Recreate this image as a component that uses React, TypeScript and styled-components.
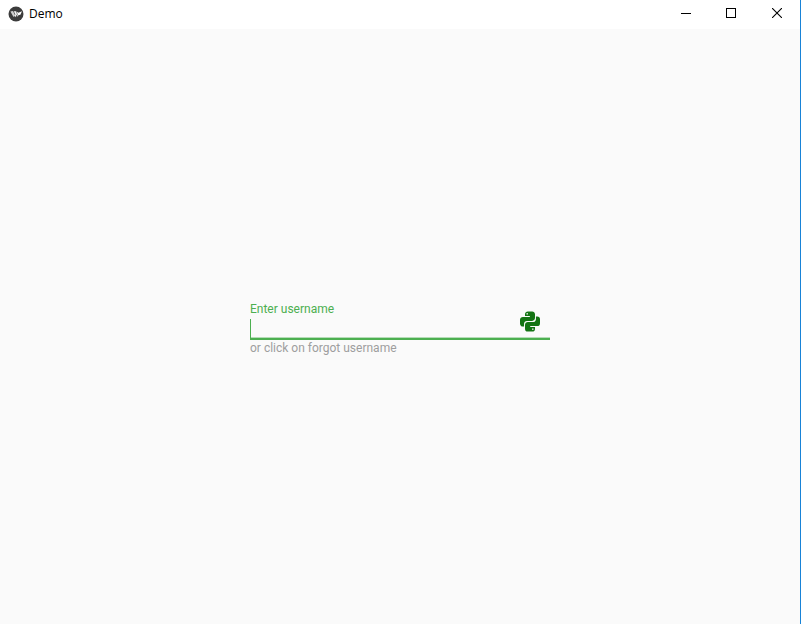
import React from "react";
import styled, { createGlobalStyle } from "styled-components";

const GlobalStyle = createGlobalStyle`
  *, *::before, *::after { box-sizing: border-box; }
  body { margin: 0; background: #fafafa; }
`;

const Window = styled.div`
  display: flex;
  flex-direction: column;
  min-height: 100vh;
  background: #fafafa;
  border-right: 1px solid #1883d7;
`;

const TitleBar = styled.header`
  display: flex;
  align-items: center;
  justify-content: space-between;
  height: 29px;
  padding: 0 0 2px 8px;
  background: #ffffff;
`;

const TitleGroup = styled.div`
  display: flex;
  align-items: center;
  gap: 5px;
`;

const Title = styled.h1`
  margin: 0;
  padding-top: 1px;
  font: 400 12px/16px "Open Sans", "Noto Sans", sans-serif;
  color: #000000;
`;

const WindowControls = styled.div`
  display: flex;
`;

const ControlButton = styled.button`
  display: flex;
  align-items: center;
  justify-content: center;
  width: 46px;
  height: 27px;
  padding: 0 0 1px;
  border: 0;
  background: transparent;
  color: #000000;

  &:hover { background: #e5e5e5; }
`;

const Content = styled.main`
  flex: 1;
  display: flex;
  align-items: center;
  justify-content: center;
`;

const Field = styled.div`
  display: flex;
  flex-direction: column;
  width: 300px;
  padding: 5px 0 1px;
  font: 400 12px/16px Roboto, sans-serif;
`;

const Label = styled.label`
  color: #4caf50;
`;

const InputRow = styled.div`
  position: relative;
  display: flex;
  height: 22px;
  margin-top: 1px;
  border-bottom: 2px solid #4caf50;
  box-shadow: inset 0 -1px 0 #b5dcb7;
`;

const TextInput = styled.input`
  flex: 1;
  min-width: 0;
  padding: 0 36px 0 2px;
  border: 0;
  outline: 0;
  background: transparent;
  color: #212121;
  font: 400 16px/20px Roboto, sans-serif;
`;

const Caret = styled.span`
  position: absolute;
  left: 0;
  top: 1px;
  bottom: 0;
  width: 1px;
  background: #4caf50;
`;

const TrailingIcon = styled.svg`
  position: absolute;
  right: 8px;
  bottom: 5px;
  width: 24px;
  height: 24px;
  fill: #147414;
`;

const HelperText = styled.p`
  margin: 0;
  color: #9e9e9e;
`;

const AppIcon = () => (
  <svg width="16" height="16" viewBox="0 0 16 16" aria-hidden="true">
    <circle cx="8" cy="8" r="7.5" fill="#3c3c3c" />
    <path d="M2.4 5.4 5 4.9 7 9.2 5.5 11Z" fill="#cfcfcf" />
    <path d="M5.8 5.2 8.2 5.2 9 8.6 7.2 11.2 6.4 9.8 7.4 8.6Z" fill="#f4f4f4" />
    <path d="M8.9 5.8 10.4 6.7 14 5.2 12.4 8.8 10.4 9.2 8.6 11.2 9.6 8.4Z" fill="#ffffff" />
  </svg>
);

const MinimizeIcon = () => (
  <svg width="12" height="10" viewBox="0 0 12 10" aria-hidden="true">
    <path d="M2 5.5H12" stroke="currentColor" shapeRendering="crispEdges" />
  </svg>
);

const MaximizeIcon = () => (
  <svg width="10" height="10" viewBox="0 0 10 10" aria-hidden="true">
    <rect x="0.5" y="0.5" width="9" height="9" fill="none" stroke="currentColor" />
  </svg>
);

const CloseIcon = () => (
  <svg width="10" height="10" viewBox="0 0 10 10" aria-hidden="true">
    <path d="M0 0 10 10M10 0 0 10" fill="none" stroke="currentColor" strokeWidth="1.1" />
  </svg>
);

const PythonIcon = () => (
  <TrailingIcon viewBox="0 0 24 24" aria-hidden="true">
    <path d="M19.14,7.5A2.86,2.86 0 0,1 22,10.36V14.14A2.86,2.86 0 0,1 19.14,17H12C12,17.39 12.32,17.96 12.71,17.96H17V19.64A2.86,2.86 0 0,1 14.14,22.5H9.86A2.86,2.86 0 0,1 7,19.64V15.89C7,14.31 8.28,13.04 9.86,13.04H15.11C16.69,13.04 17.96,11.76 17.96,10.18V7.5H19.14M14.86,19.29C14.46,19.29 14.14,19.59 14.14,20.18C14.14,20.77 14.46,20.89 14.86,20.89A0.71,0.71 0 0,0 15.57,20.18C15.57,19.59 15.25,19.29 14.86,19.29M4.86,17.5C3.28,17.5 2,16.22 2,14.64V10.86C2,9.28 3.28,8 4.86,8H12C12,7.61 11.68,7.04 11.29,7.04H7V5.36C7,3.78 8.28,2.5 9.86,2.5H14.14C15.72,2.5 17,3.78 17,5.36V9.11C17,10.69 15.72,11.96 14.14,11.96H8.89C7.31,11.96 6.04,13.24 6.04,14.82V17.5H4.86M9.14,5.71C9.54,5.71 9.86,5.41 9.86,4.82C9.86,4.23 9.54,4.11 9.14,4.11A0.71,0.71 0 0,0 8.43,4.82C8.43,5.41 8.75,5.71 9.14,5.71Z" />
  </TrailingIcon>
);

export default function App() {
  return (
    <Window>
      <GlobalStyle />
      <TitleBar>
        <TitleGroup>
          <AppIcon />
          <Title>Demo</Title>
        </TitleGroup>
        <WindowControls>
          <ControlButton type="button" aria-label="Minimize"><MinimizeIcon /></ControlButton>
          <ControlButton type="button" aria-label="Maximize"><MaximizeIcon /></ControlButton>
          <ControlButton type="button" aria-label="Close"><CloseIcon /></ControlButton>
        </WindowControls>
      </TitleBar>
      <Content>
        <Field>
          <Label htmlFor="username">Enter username</Label>
          <InputRow>
            <TextInput id="username" type="text" aria-describedby="username-help" />
            <Caret />
            <PythonIcon />
          </InputRow>
          <HelperText id="username-help">or click on forgot username</HelperText>
        </Field>
      </Content>
    </Window>
  );
}
